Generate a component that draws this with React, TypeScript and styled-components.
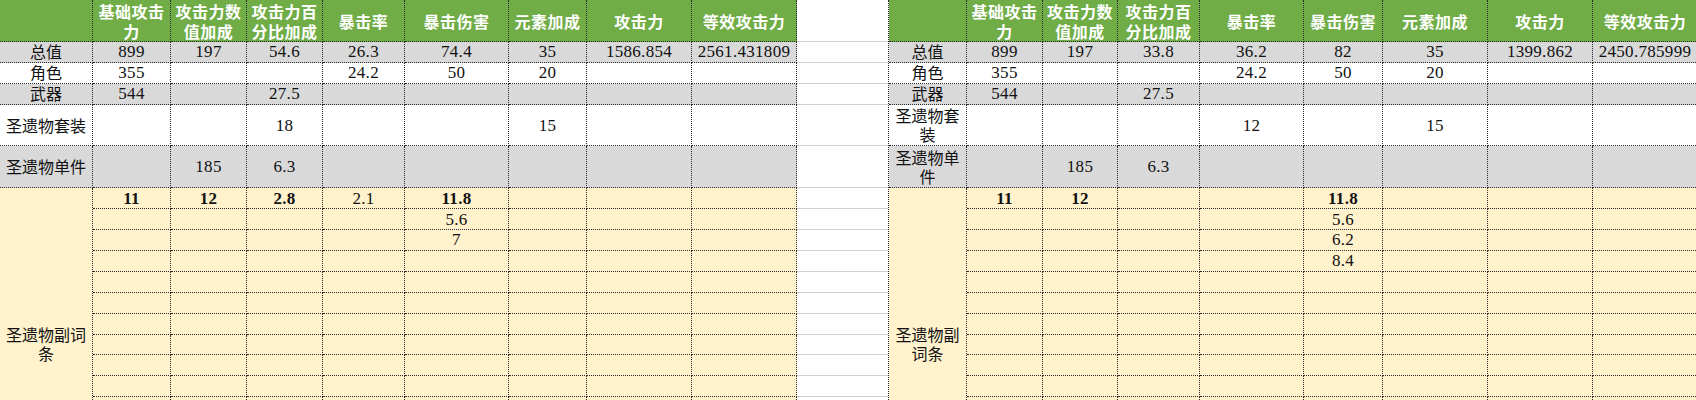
import styled, { createGlobalStyle } from "styled-components";

const GlobalStyle = createGlobalStyle`
    body {
        margin: 0;
        background: #ffffff;
        overflow: hidden;
    }
`;

type Tone = "grey" | "white" | "yellow";

const toneBg: Record<Tone, string> = {
    grey: "#d9d9d9",
    white: "#ffffff",
    yellow: "#fff2cc",
};

const ROWS = "42px repeat(3, 20.9px) 41.8px 41.8px repeat(15, 20.9px)";
const BORDER = "1px dotted #2b2b2b";

const Page = styled.div`
    display: flex;
    align-items: flex-start;
    width: 1696px;
    height: 400px;
    overflow: hidden;
`;

const Sheet = styled.div<{ $cols: number[]; $edge?: boolean }>`
    flex: none;
    display: grid;
    grid-template-columns: ${(p) => p.$cols.map((c) => `${c}px`).join(" ")};
    grid-template-rows: ${ROWS};
    border-left: ${(p) => (p.$edge ? BORDER : "none")};
`;

const Gap = styled.div`
    flex: none;
    width: 91px;
    display: grid;
    grid-template-rows: ${ROWS};
`;

const GridLine = styled.div`
    box-sizing: border-box;
    border-bottom: 1px solid #d2d2d2;
`;

const BaseCell = styled.div`
    box-sizing: border-box;
    display: flex;
    align-items: center;
    justify-content: center;
    text-align: center;
    min-width: 0;
    border-right: ${BORDER};
    border-bottom: ${BORDER};
    color: #111;
`;

const HeadCell = styled(BaseCell)`
    background: #70ad47;
    color: #ffffff;
    font-family: "Noto Sans CJK SC", sans-serif;
    font-weight: 700;
    font-size: 16px;
    line-height: 20px;
    letter-spacing: 0.5px;
    padding: 0 3px;
`;

const LabelCell = styled(BaseCell)<{ $tone: Tone; $span?: number }>`
    background: ${(p) => toneBg[p.$tone]};
    font-family: "Noto Sans CJK SC", sans-serif;
    font-size: 16px;
    line-height: 19px;
    padding: 0 2px;
    grid-row: ${(p) => (p.$span ? `span ${p.$span}` : "auto")};
`;

const ValueCell = styled(BaseCell)<{ $tone: Tone; $bold?: boolean }>`
    background: ${(p) => toneBg[p.$tone]};
    font-family: "Liberation Serif", serif;
    font-size: 17px;
    line-height: 18px;
    letter-spacing: 0.3px;
    padding-top: 1px;
    font-weight: ${(p) => (p.$bold ? 700 : 400)};
`;

type Val = string | { v: string; bold: true };
const b = (v: string): Val => ({ v, bold: true });

type SheetData = {
    widths: number[];
    edge?: boolean;
    rows: { label: string; tone: Tone; values: Val[] }[];
    subs: Val[][];
};

const HEADERS = ["", "基础攻击力", "攻击力数值加成", "攻击力百分比加成", "暴击率", "暴击伤害", "元素加成", "攻击力", "等效攻击力"];
const SUB_ROWS = 15;

const left: SheetData = {
    widths: [93, 78, 76, 76, 82, 104, 78, 105, 105],
    rows: [
        { label: "总值", tone: "grey", values: ["899", "197", "54.6", "26.3", "74.4", "35", "1586.854", "2561.431809"] },
        { label: "角色", tone: "white", values: ["355", "", "", "24.2", "50", "20", "", ""] },
        { label: "武器", tone: "grey", values: ["544", "", "27.5", "", "", "", "", ""] },
        { label: "圣遗物套装", tone: "white", values: ["", "", "18", "", "", "15", "", ""] },
        { label: "圣遗物单件", tone: "grey", values: ["", "185", "6.3", "", "", "", "", ""] },
    ],
    subs: [
        [b("11"), b("12"), b("2.8"), "2.1", b("11.8")],
        ["", "", "", "", "5.6"],
        ["", "", "", "", "7"],
    ],
};

const right: SheetData = {
    widths: [78, 76, 75, 82, 104, 79, 105, 105, 105],
    edge: true,
    rows: [
        { label: "总值", tone: "grey", values: ["899", "197", "33.8", "36.2", "82", "35", "1399.862", "2450.785999"] },
        { label: "角色", tone: "white", values: ["355", "", "", "24.2", "50", "20", "", ""] },
        { label: "武器", tone: "grey", values: ["544", "", "27.5", "", "", "", "", ""] },
        { label: "圣遗物套装", tone: "white", values: ["", "", "", "12", "", "15", "", ""] },
        { label: "圣遗物单件", tone: "grey", values: ["", "185", "6.3", "", "", "", "", ""] },
    ],
    subs: [
        [b("11"), b("12"), "", "", b("11.8")],
        ["", "", "", "", "5.6"],
        ["", "", "", "", "6.2"],
        ["", "", "", "", "8.4"],
    ],
};

const Value = ({ val, tone }: { val: Val; tone: Tone }) =>
    typeof val === "string" ? (
        <ValueCell $tone={tone}>{val}</ValueCell>
    ) : (
        <ValueCell $tone={tone} $bold>
            {val.v}
        </ValueCell>
    );

const StatSheet = ({ data }: { data: SheetData }) => {
    const cols = data.widths.length - 1;
    const subs = Array.from({ length: SUB_ROWS }, (_, i) => {
        const row = data.subs[i] ?? [];
        return Array.from({ length: cols }, (_, j) => row[j] ?? "");
    });

    return (
        <Sheet $cols={data.widths} $edge={data.edge}>
            {HEADERS.map((h, i) => (
                <HeadCell key={`h${i}`}>{h}</HeadCell>
            ))}
            {data.rows.map((row) => [
                <LabelCell key={row.label} $tone={row.tone}>
                    {row.label}
                </LabelCell>,
                ...row.values.map((v, j) => <Value key={`${row.label}-${j}`} val={v} tone={row.tone} />),
            ])}
            <LabelCell $tone="yellow" $span={SUB_ROWS}>
                圣遗物副词条
            </LabelCell>
            {subs.map((row, i) => row.map((v, j) => <Value key={`s${i}-${j}`} val={v} tone="yellow" />))}
        </Sheet>
    );
};

export default function App() {
    return (
        <>
            <GlobalStyle />
            <Page>
                <StatSheet data={left} />
                <Gap>
                    {Array.from({ length: 6 + SUB_ROWS }, (_, i) => (
                        <GridLine key={i} />
                    ))}
                </Gap>
                <StatSheet data={right} />
            </Page>
        </>
    );
}
